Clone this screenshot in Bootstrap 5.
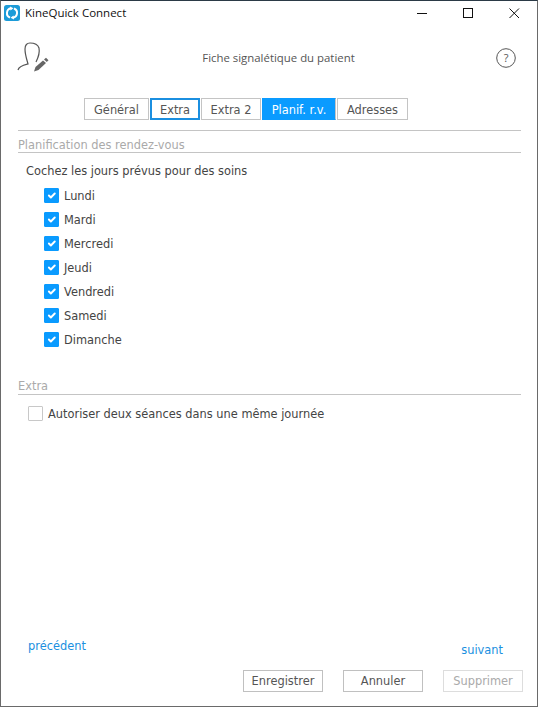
<!DOCTYPE html>
<html lang="fr">
<head>
    <meta charset="UTF-8">
    <meta name="viewport" content="width=device-width, initial-scale=1.0">
    <title>KineQuick Connect</title>
    <link href="https://cdn.jsdelivr.net/npm/bootstrap@5.3.0/dist/css/bootstrap.min.css" rel="stylesheet">
    <style>
        html, body {
            height: 100%;
        }

        body {
            background: #fff;
            color: #444;
            font-family: "DejaVu Sans", Verdana, sans-serif;
            font-size: 11.4px;
        }

        .app-window {
            height: 707px;
            border: 1px solid #6a6a6a;
            border-top-color: #2b3a46;
        }

        .title-bar {
            height: 27px;
            font-family: "Open Sans", "Noto Sans", sans-serif;
            font-size: 11.5px;
            color: #111;
            padding: 0 0 3px 3px;
        }

        .app-logo {
            margin-right: 5px;
        }

        .win-btn {
            width: 46px;
            height: 24px;
        }

        .head-row {
            height: 70px;
            padding: 0 21px 10px 15px;
            font-family: "Open Sans", "Noto Sans", sans-serif;
            font-size: 11.4px;
            color: #555;
        }

        .head-title {
            margin-left: 11px;
        }

        .tab-strip {
            padding-left: 83px;
            gap: 1px;
        }

        .tab-btn {
            height: 22px;
            padding: 2px 0 0;
            border: 1px solid #c4c4c4;
            border-radius: 0;
            background: #fff;
            color: #555;
            font-size: 11.4px;
            line-height: 18px;
        }

        .tab-focus {
            border: 2px solid #1b8fe0;
            padding-top: 1px;
        }

        .tab-on {
            background: #0a9bff;
            border-color: #0a9bff #c4c4c4 #0a9bff #0a9bff;
            color: #fff;
        }

        .form-area {
            padding: 10px 16px 0 17px;
        }

        .sect-title {
            border-bottom: 1px solid #c4c4c4;
            color: #aaa;
            height: 23px;
            line-height: 28px;
        }

        .top-line {
            border-top: 1px solid #c4c4c4;
        }

        .intro-text {
            color: #444;
            padding-left: 8px;
            margin-top: 10px;
            margin-bottom: 4px;
        }

        .day-list {
            padding-left: 26px;
        }

        .day-check {
            height: 24px;
            gap: 5px;
        }

        .extra-title {
            margin-top: 20px;
        }

        .extra-check {
            margin-top: 7px;
            margin-left: 10px;
        }

        .form-check-input.day-box {
            width: 15px;
            height: 15px;
            margin: 0 0 2px;
            border-radius: 1px;
            border: 1px solid #c8c8c8;
        }

        .form-check-input.day-box:checked {
            background-color: #0a9bff;
            border-color: #0a9bff;
        }

        .link-row {
            padding: 0 18px 0 10px;
        }

        .link-txt {
            color: #1b8fe0;
            text-decoration: none;
        }

        .action-row {
            gap: 20px;
            margin-right: -2px;
            padding: 11px 0 14px;
        }

        .act-btn {
            width: 80px;
            height: 22px;
            padding: 1px 0 0;
            border: 1px solid #c0c0c0;
            border-radius: 0;
            background: #fff;
            color: #555;
            font-size: 11.4px;
            line-height: 19px;
        }

        .act-btn:disabled {
            border-color: #ddd;
            color: #aaa;
            opacity: 1;
            background: #fff;
        }
    </style>
</head>

<body>
    <div class="app-window d-flex flex-column">
        <div class="title-bar d-flex align-items-center">
            <svg class="app-logo" width="16" height="16" viewBox="0 0 16 16">
                <rect width="16" height="16" rx="2.500" fill="#1c9bd8"/>
                <path d="M7 3.300A4.800 4.800 0 0 0 6 12.500M9 12.700A4.800 4.800 0 0 0 10 3.500" fill="none" stroke="#fff" stroke-width="2"/>
                <path d="M6 1.500L9.500 3.300L6.500 5.500zM10 14.500L6.500 12.700L9.500 10.500z" fill="#fff"/>
            </svg>
            <span class="flex-grow-1">KineQuick Connect</span>
            <div class="win-btn d-flex align-items-center justify-content-center">
                <svg width="11" height="11" viewBox="0 0 11 11"><path d="M0 5.500H10" stroke="#111" fill="none"/></svg>
            </div>
            <div class="win-btn d-flex align-items-center justify-content-center">
                <svg width="11" height="11" viewBox="0 0 11 11"><rect x=".5" y=".5" width="9" height="9" stroke="#111" fill="none"/></svg>
            </div>
            <div class="win-btn d-flex align-items-center justify-content-center">
                <svg width="11" height="11" viewBox="0 0 11 11"><path d="M.5.5L10 10M10 .5L.5 10" stroke="#111" fill="none"/></svg>
            </div>
        </div>

        <div class="head-row d-flex align-items-center justify-content-between">
            <svg width="34" height="32" viewBox="0 0 34 32">
                <path d="M2 28C3 24 8 23 12 22C11 18 9 13 9 7C9 3 11 1 14 1C19 1 22 3 23 6C24 11 22 16 20 20" fill="none" stroke="#555" stroke-width="1.200"/>
                <path d="M18 29.500L19.500 25L27 18.500L30 21L22.500 28z" fill="#666"/>
                <path d="M28 17.500L30 15.800L32.500 18.300L30.800 20z" fill="#666"/>
            </svg>
            <span class="head-title">Fiche signalétique du patient</span>
            <svg width="20" height="20" viewBox="0 0 20 20">
                <circle cx="10" cy="10" r="9.300" fill="none" stroke="#555"/>
                <text x="10" y="14" text-anchor="middle" font-size="11" font-family="Open Sans" fill="#555">?</text>
            </svg>
        </div>

        <div class="tab-strip d-flex">
            <button class="btn tab-btn" style="width:65px">Général</button>
            <button class="btn tab-btn tab-focus" style="width:50px">Extra</button>
            <button class="btn tab-btn" style="width:60px">Extra 2</button>
            <button class="btn tab-btn tab-on" style="width:74px">Planif. r.v.</button>
            <button class="btn tab-btn" style="width:71px">Adresses</button>
        </div>

        <div class="form-area flex-grow-1 d-flex flex-column">
            <div class="sect-title top-line">Planification des rendez-vous</div>
            <div class="intro-text">Cochez les jours prévus pour des soins</div>
            <div id="days" class="day-list"></div>

            <div class="sect-title extra-title">Extra</div>
            <label class="day-check extra-check d-flex align-items-center">
                <input type="checkbox" class="form-check-input day-box">
                <span>Autoriser deux séances dans une même journée</span>
            </label>

            <div class="link-row d-flex justify-content-between align-items-start mt-auto">
                <a href="#" class="link-txt">précédent</a>
                <a href="#" class="link-txt pt-1">suivant</a>
            </div>
            <div class="action-row d-flex justify-content-end">
                <button class="btn act-btn">Enregistrer</button>
                <button class="btn act-btn">Annuler</button>
                <button class="btn act-btn" disabled>Supprimer</button>
            </div>
        </div>
    </div>

    <script src="https://cdn.jsdelivr.net/npm/bootstrap@5.3.0/dist/js/bootstrap.bundle.min.js"></script>
    <script>
        const days = ["Lundi", "Mardi", "Mercredi", "Jeudi", "Vendredi", "Samedi", "Dimanche"];
        let html = "";
        for (let i = 0; i < days.length; i++) {
            html += `<label class="day-check d-flex align-items-center">
                <input type="checkbox" class="form-check-input day-box" checked>
                <span>${days[i]}</span>
            </label>`;
        }
        document.getElementById("days").innerHTML = html;
    </script>
</body>

</html>
